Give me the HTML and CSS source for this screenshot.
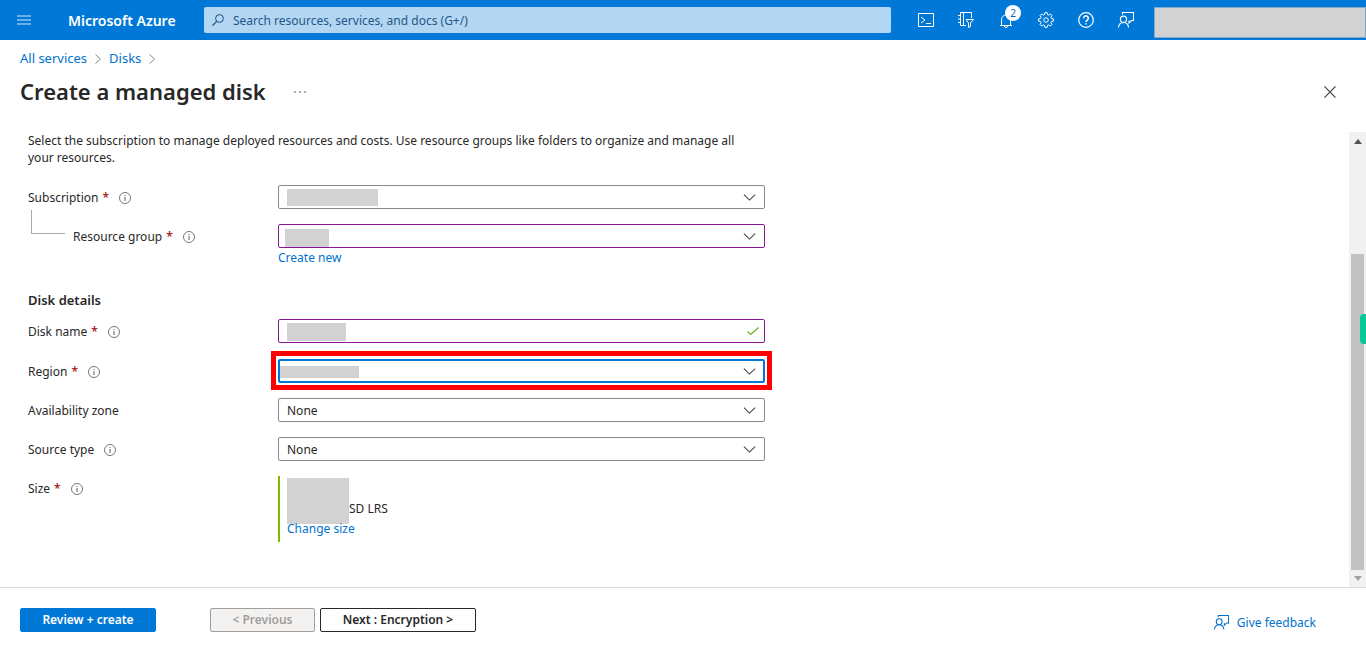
FILE: index.html
```html
<!DOCTYPE html>
<html lang="en">
<head>
<meta charset="utf-8">
<meta name="viewport" content="width=device-width, initial-scale=1">
<title>Create a managed disk - Microsoft Azure</title>
<link rel="stylesheet" href="styles.css">
</head>
<body>
<svg class="sprite" aria-hidden="true">
  <symbol id="info" viewBox="0 0 12 12"><circle cx="6" cy="6" r="5.5" fill="none" stroke="currentColor"/><path d="M6 5v4M6 3v1" stroke="currentColor" stroke-width="1.2"/></symbol>
  <symbol id="chevron" viewBox="0 0 14 8"><path d="M.6.6 7 7 13.4.6" fill="none" stroke="currentColor" stroke-width="1.2"/></symbol>
  <symbol id="crumb" viewBox="0 0 6 10"><path d="M.5.5 5.5 5 .5 9.5" fill="none" stroke="currentColor"/></symbol>
  <symbol id="feedback" viewBox="0 0 16 16"><path d="M4.500 2.500V.5h11v8h-2l-2.500 2.500V8.500M.5 15.500c0-3 2-5 5-5s5 2 5 5" fill="none" stroke="currentColor" stroke-width="1.1"/><circle cx="5.500" cy="7.200" r="3.100" fill="none" stroke="currentColor" stroke-width="1.1"/></symbol>
</svg>

<header class="topbar">
  <button class="menu" aria-label="Show portal menu"><svg width="14" height="10" viewBox="0 0 14 10"><path d="M0 1h14M0 5h14M0 9h14" stroke="currentColor" stroke-width="1.5"/></svg></button>
  <a class="brand" href="#">Microsoft Azure</a>
  <div class="search">
    <svg width="12" height="12" viewBox="0 0 12 12"><circle cx="7.5" cy="4.5" r="3.9" fill="none" stroke="currentColor"/><path d="M4.700 7.300.4 11.600" stroke="currentColor" stroke-width="1.2"/></svg>
    <input type="search" placeholder="Search resources, services, and docs (G+/)" aria-label="Search">
  </div>
  <nav class="tools" aria-label="Portal tools">
    <button aria-label="Cloud Shell"><svg width="16" height="16" viewBox="0 0 16 16" fill="none" stroke="currentColor"><path d="M.5 1.500h15v13H.5zM3 5l4 3-4 3M8 11.500h5"/></svg></button>
    <button aria-label="Directories and subscriptions"><svg width="16" height="16" viewBox="0 0 16 16" fill="none" stroke="currentColor"><path d="M8 13.500H2.500V.5h11V6M5.500.5v13M0 3.500h2.500M0 7h2.500M0 10.500h2.500M8 7.500h7.500L12.500 11v3.500l-2 1V11z"/></svg></button>
    <button aria-label="Notifications, 2"><svg width="14" height="16" viewBox="0 0 14 16" fill="none" stroke="currentColor"><path d="M1 13.500h12M2.500 13V7.500a4.500 4.500 0 0 1 9 0V13M5.500 14a1.500 1.500 0 0 0 3 0"/></svg><span class="badge">2</span></button>
    <button aria-label="Settings"><svg width="16" height="16" viewBox="0 0 16 16" fill="none" stroke="currentColor"><path d="M6.900.6h2.200l.4 2 1.200.5 1.700-1.100 1.600 1.600-1.100 1.700.5 1.200 2 .4v2.200l-2 .4-.5 1.200 1.100 1.700-1.600 1.600-1.700-1.100-1.200.5-.4 2H6.900l-.4-2-1.200-.5L3.600 14 2 12.400l1.100-1.700-.5-1.200-2-.4V6.900l2-.4.5-1.200L2 3.600 3.600 2l1.700 1.100 1.200-.5z"/><circle cx="8" cy="8" r="2.300"/></svg></button>
    <button aria-label="Help"><svg width="16" height="16" viewBox="0 0 16 16" fill="none" stroke="currentColor" stroke-width="1.2"><circle cx="8" cy="8" r="7.3"/><path d="M5.700 6.200a2.300 2.300 0 1 1 3.600 1.900C8.400 8.700 8 9 8 10.100M8 11.200v1.300" stroke-width="1.5"/></svg></button>
    <button aria-label="Feedback"><svg width="16" height="16"><use href="#feedback"/></svg></button>
  </nav>
  <div class="account"></div>
</header>

<section class="heading">
  <nav class="crumbs" aria-label="Breadcrumb">
    <a href="#">All services</a><svg width="6" height="10"><use href="#crumb"/></svg>
    <a href="#">Disks</a><svg width="6" height="10"><use href="#crumb"/></svg>
  </nav>
  <div class="title">
    <h1>Create a managed disk</h1>
    <button class="more" aria-label="More"><svg width="12" height="2" viewBox="0 0 12 2"><path d="M0 1h2M5 1h2M10 1h2" stroke="currentColor"/></svg></button>
    <button class="close" aria-label="Close"><svg width="12" height="12" viewBox="0 0 12 12"><path d="M.4.4l11.200 11.200M11.600.4.4 11.600" stroke="currentColor" stroke-width="1.2"/></svg></button>
  </div>
</section>

<main class="blade">
  <form class="form" id="disk">
    <p class="intro">Select the subscription to manage deployed resources and costs. Use resource groups like folders to organize and manage all your resources.</p>

    <div class="row">
      <div class="label"><label for="sub">Subscription</label><b>*</b><svg class="info"><use href="#info"/></svg></div>
      <div class="field"><select id="sub"><option></option></select><span class="mask mask-sub"></span><svg class="chevron"><use href="#chevron"/></svg></div>
    </div>
    <div class="row">
      <div class="label nested"><label for="rg">Resource group</label><b>*</b><svg class="info"><use href="#info"/></svg></div>
      <div class="field"><select id="rg" class="edited"><option></option></select><span class="mask mask-rg"></span><svg class="chevron"><use href="#chevron"/></svg></div>
      <a class="create" href="#">Create new</a>
    </div>

    <h2>Disk details</h2>
    <div class="row">
      <div class="label"><label for="name">Disk name</label><b>*</b><svg class="info"><use href="#info"/></svg></div>
      <div class="field"><input id="name" class="edited" type="text"><span class="mask mask-name"></span><svg class="check" viewBox="0 0 12 8"><path d="M.5 4.500 3.700 7.400 11.600.5" fill="none" stroke="currentColor" stroke-width="1.2"/></svg></div>
    </div>
    <div class="row">
      <div class="label"><label for="region">Region</label><b>*</b><svg class="info"><use href="#info"/></svg></div>
      <div class="field highlight"><select id="region" class="active"><option></option></select><span class="mask mask-region"></span><svg class="chevron"><use href="#chevron"/></svg></div>
    </div>
    <div class="row">
      <div class="label"><label for="zone">Availability zone</label></div>
      <div class="field"><select id="zone"><option>None</option></select><svg class="chevron"><use href="#chevron"/></svg></div>
    </div>
    <div class="row">
      <div class="label"><label for="source">Source type</label><svg class="info"><use href="#info"/></svg></div>
      <div class="field"><select id="source"><option>None</option></select><svg class="chevron"><use href="#chevron"/></svg></div>
    </div>
    <div class="row">
      <div class="label"><span>Size</span><b>*</b><svg class="info"><use href="#info"/></svg></div>
      <div class="size">
        <div class="sku"><span class="block"></span><span>SD LRS</span></div>
        <a href="#">Change size</a>
      </div>
    </div>
  </form>
  <div class="scrollbar" aria-hidden="true">
    <svg width="8" height="5" viewBox="0 0 8 5"><path d="M4 0l4 5H0z" fill="#505050"/></svg>
    <div class="track"><div class="thumb"></div></div>
    <svg width="8" height="5" viewBox="0 0 8 5"><path d="M0 0h8L4 5z" fill="#a3a3a3"/></svg>
  </div>
</main>

<footer class="actions">
  <button class="btn primary" type="button">Review + create</button>
  <button class="btn previous" type="button" disabled>&lt; Previous</button>
  <button class="btn next" type="button">Next : Encryption &gt;</button>
  <a class="give" href="#"><svg width="15" height="15"><use href="#feedback"/></svg>Give feedback</a>
</footer>
<button class="side-tab" aria-label="Open side panel"></button>
</body>
</html>
```
FILE: styles.css
```css
* { box-sizing: border-box; }

body {
  display: flex;
  flex-direction: column;
  min-height: 100vh;
  margin: 0;
  background: #fff;
  color: #292827;
  font: 12px/17px "Noto Sans", "Open Sans", sans-serif;
}

button, input, select { font: inherit; color: inherit; }
button { padding: 0; border: 0; background: none; cursor: pointer; }
svg { display: block; flex: none; }
a { color: #0072d0; text-decoration: none; }
.sprite { position: absolute; width: 0; height: 0; }

.topbar {
  display: flex;
  align-items: center;
  height: 40px;
  background: #0078d7;
  color: #fff;
}
.menu { display: grid; place-items: center; width: 48px; height: 40px; color: #8fc3ee; }
.brand { width: 136px; margin-left: 20px; color: #fff; font-size: 14px; font-weight: 600; white-space: nowrap; }
.search {
  display: flex;
  align-items: center;
  gap: 9px;
  flex: 1;
  height: 26px;
  padding: 0 8px;
  border-radius: 2px;
  background: #b3d6f3;
  color: #1b4b7c;
}
.search input { flex: 1; min-width: 0; padding: 0; border: 0; outline: 0; background: none; appearance: none; }
.search input::placeholder { color: #1f5788; opacity: 1; }
.tools { display: flex; margin-left: 15px; }
.tools button { position: relative; display: grid; place-items: center; width: 40px; height: 40px; }
.badge {
  position: absolute;
  top: 5px;
  left: 19px;
  width: 16px;
  height: 16px;
  border-radius: 8px;
  background: #fff;
  color: #0067c0;
  font-size: 10px;
  line-height: 16px;
}
.account { width: 212px; height: 31px; margin: 5px 0 0 8px; border: 1px solid #7fa9cd; background: #d2d2d2; }

.heading { display: flex; flex-direction: column; gap: 9px; height: 92px; padding: 10px 20px 0; }
.crumbs { display: flex; align-items: center; gap: 8px; color: #888; font-size: 13px; }
.title { display: flex; align-items: center; height: 32px; }
h1 { margin: 0; font-size: 22px; font-weight: 600; line-height: 30px; padding-bottom: 2px; }
.more { margin-left: 28px; color: #555; }
.close { display: grid; place-items: center; width: 32px; height: 32px; margin: 0 0 0 auto; color: #444; }

.blade { display: flex; flex: 1; }
.form { flex: 1; padding: 0 28px 29px; }
.intro { max-width: 724px; margin: 0 0 19px; }
.row { display: grid; grid-template-columns: 250px minmax(0, 487px); margin-bottom: 15px; }
.label { display: flex; align-items: center; height: 24px; }
.label b { margin-left: 4px; color: #a4262c; font-weight: 600; }
.info { width: 12px; height: 12px; margin: 1px 0 0 10px; color: #777; }
.nested { position: relative; padding-left: 45px; }
.nested::before {
  content: "";
  position: absolute;
  left: 3px;
  bottom: 14px;
  width: 33px;
  height: 23px;
  border: solid #aaa;
  border-width: 0 0 1px 1px;
}
.create { grid-column: 2; justify-self: start; padding-top: 1px; }

.field { position: relative; }
.field select, .field input {
  display: block;
  width: 100%;
  height: 24px;
  padding: 0 8px;
  border: 1px solid #8a8886;
  border-radius: 2px;
  outline: 0;
  background: #fff;
  appearance: none;
}
.field .edited { border-color: #881798; }
.field .active { border: 2px solid #0078d4; }
.highlight::after {
  content: "";
  position: absolute;
  inset: -8px -7px -7px;
  border: 5px solid #f00;
  pointer-events: none;
}
.chevron, .check { position: absolute; top: 9px; right: 9px; width: 13px; height: 7px; color: #444; pointer-events: none; }
.check { top: 8px; right: 6px; width: 12px; height: 8px; color: #6bb02c; }
.mask { position: absolute; background: #d2d2d2; pointer-events: none; }
.mask-sub { top: 4px; left: 9px; width: 91px; height: 17px; }
.mask-rg { top: 5px; left: 7px; width: 44px; height: 18px; }
.mask-name { top: 4px; left: 9px; width: 59px; height: 18px; }
.mask-region { top: 7px; left: 2px; width: 79px; height: 12px; }

h2 { margin: 26px 0 10px; font-size: 13px; font-weight: 600; line-height: 17px; }
h2 + .row { margin-bottom: 16px; }

.size { height: 66px; padding: 2px 0 0 7px; border-left: 2px solid #7fba00; line-height: 9px; }
.sku { display: flex; align-items: flex-end; line-height: 30px; }
.block { width: 62px; height: 46px; background: #d2d2d2; }

.scrollbar {
  display: flex;
  flex-direction: column;
  align-items: center;
  gap: 6px;
  width: 17px;
  padding: 7px 0 6px;
  background: #f1f1f1;
}
.track { display: flex; flex: 1; width: 13px; padding-top: 104px; }
.thumb { width: 100%; background: #c1c1c1; }

.actions { display: flex; align-items: flex-start; height: 70px; padding: 20px 50px 0 20px; border-top: 1px solid #dcdcdc; }
.btn { height: 24px; border: 1px solid; border-radius: 2px; font-size: 12px; font-weight: 600; line-height: 22px; }
.primary { width: 136px; border-color: #0078d7; background: #0078d7; color: #fff; }
.previous { width: 105px; margin: 0 5px 0 54px; border-color: #a19f9d; background: #f3f2f1; color: #a19f9d; }
.next { width: 156px; background: #fff; }
.give { display: flex; align-items: center; gap: 8px; margin: 6px 0 0 auto; }

.side-tab { position: fixed; top: 314px; right: 0; width: 6px; height: 30px; border-radius: 4px 0 0 4px; background: #06c997; }
```
